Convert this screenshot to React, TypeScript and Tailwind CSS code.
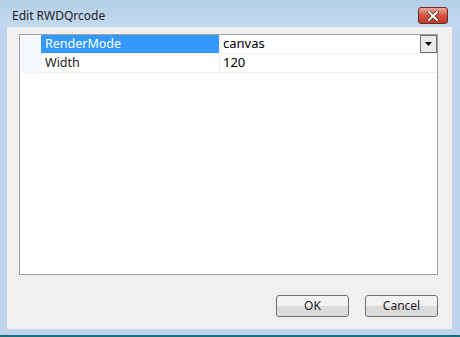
import React from 'react';

const rows = [
  { name: 'RenderMode', value: 'canvas', selected: true },
  { name: 'Width', value: '120', selected: false },
];

const App: React.FC = () => {
  return (
    <div
      className="w-[460px] h-[337px] flex flex-col bg-[#bdd4ec] border-b-2 border-b-[#1b6f7c]"
      style={{ fontFamily: '"Noto Sans", "Open Sans", sans-serif' }}
    >
      {/* Title bar */}
      <div className="h-[27px] flex items-center justify-between pl-[12px] pr-[12px] bg-gradient-to-b from-[#b6cfe9] to-[#c2d8ef]">
        <span className="text-[12px] text-[#1e1e1e] mt-[4px]">Edit RWDQrcode</span>
        <button className="w-[30px] h-[17px] mt-[4px] rounded-[3px] border border-[#6b2a24] bg-gradient-to-b from-[#e9a99b] via-[#d2533f] to-[#c23c27] flex items-center justify-center">
          <svg width="12" height="10" viewBox="0 0 12 10">
            <path d="M2 1 L10 9 M10 1 L2 9" stroke="#5a2a26" strokeWidth="3.4" strokeLinecap="square" />
            <path d="M2 1 L10 9 M10 1 L2 9" stroke="#ffffff" strokeWidth="2" strokeLinecap="square" />
          </svg>
        </button>
      </div>

      {/* Client area */}
      <div className="flex-1 ml-[7px] mr-[8px] mb-[6px] bg-[#f0f0f0] flex flex-col pt-[7px] pl-[12px] pr-[14px] pb-[12px]">
        <div className="h-[241px] border border-[#a0a0a0] bg-white flex flex-col">
          {rows.map((r) => (
            <div key={r.name} className="h-[19px] flex text-[12.5px]">
              <div className="w-[21px] bg-[#f4f7fc]" />
              <div className="flex-1 flex border-b border-[#f0f0f0]">
                <div
                  className={`w-[179px] pl-[4px] flex items-center border-r border-[#f0f0f0] ${
                    r.selected ? 'bg-[#3399ff] text-white' : 'text-[#1e1e1e]'
                  }`}
                >
                  {r.name}
                </div>
                <div className="flex-1 flex items-center justify-between pl-[3px] text-black text-[13px]">
                  <span>{r.value}</span>
                  {r.selected && (
                    <div className="w-[17px] h-[18px] border border-[#6f6f6f] bg-[#ebebeb] flex items-center justify-center">
                      <svg width="7" height="4" viewBox="0 0 7 4">
                        <path d="M0 0 H7 L3.5 4 Z" fill="#000" />
                      </svg>
                    </div>
                  )}
                </div>
              </div>
            </div>
          ))}
        </div>

        <div className="mt-[20px] flex justify-end gap-[16px]">
          {['OK', 'Cancel'].map((label) => (
            <button
              key={label}
              className="w-[73px] h-[22px] rounded-[3px] border border-[#707070] bg-gradient-to-b from-[#f2f2f2] from-50% to-[#dcdcdc] to-50% text-[12px] text-[#1e1e1e] flex items-center justify-center"
            >
              {label}
            </button>
          ))}
        </div>
      </div>
    </div>
  );
};

export default App;
